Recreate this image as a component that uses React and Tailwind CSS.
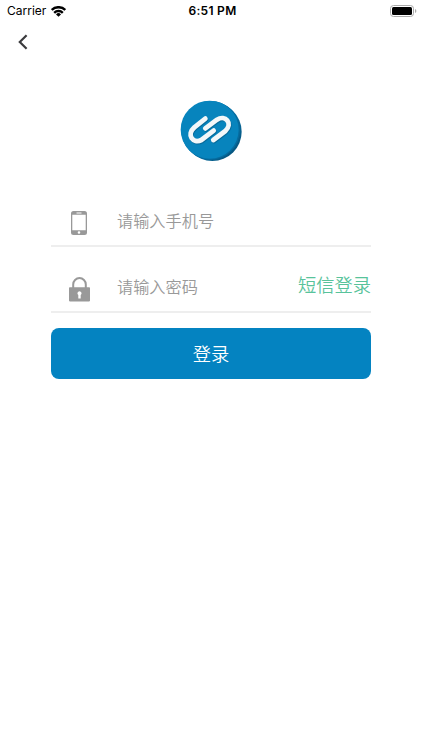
const cjk = "font-['Noto_Sans_CJK_SC',sans-serif] font-[350]";

function Logo() {
  return (
    <svg width="74" height="74" viewBox="0 0 222 222" fill="none">
      <defs>
        <linearGradient id="edge" x1="0" y1="0" x2="1" y2="1">
          <stop offset="0.5" stopColor="#0874aa" />
          <stop offset="1" stopColor="#064b70" />
        </linearGradient>
      </defs>
      <circle cx="115" cy="113" r="88" fill="url(#edge)" />
      <circle cx="110" cy="109" r="88" fill="#066b9e" />
      <circle cx="107" cy="107" r="87" fill="#0784bd" />
      <g strokeWidth="14.5" strokeLinecap="round" strokeLinejoin="round">
        <g stroke="#076a9a" transform="translate(2 3)">
          <path d="M94 74 L61 100 C36 122 57 151 82 138 L119 110" />
          <path d="M94 103 L129 77 C154 61 178 88 154 111 L118 138" />
        </g>
        <g stroke="#f3f7f9">
          <path d="M94 74 L61 100 C36 122 57 151 82 138 L119 110" />
          <path d="M94 103 L129 77 C154 61 178 88 154 111 L118 138" />
        </g>
      </g>
    </svg>
  );
}

function Phone() {
  return (
    <svg width="16" height="24" viewBox="0 0 16 24">
      <path fillRule="evenodd" fill="#999" d="M2.5 0h11A2.5 2.5 0 0 1 16 2.5v19a2.5 2.5 0 0 1-2.5 2.5h-11A2.5 2.5 0 0 1 0 21.5v-19A2.5 2.5 0 0 1 2.5 0ZM1.3 3.7v15.6h13.4V3.7ZM5.5 1.4v1h5v-1ZM8 20.2a1.3 1.3 0 1 0 0 2.6 1.3 1.3 0 0 0 0-2.6Z" />
    </svg>
  );
}

function Lock() {
  return (
    <svg width="21" height="25" viewBox="0 0 21 25">
      <path d="M4.2 11V7.4a6.3 6.3 0 0 1 12.6 0V11" fill="none" stroke="#999" strokeWidth="2" />
      <path fillRule="evenodd" fill="#999" d="M.8 10.2h19.4q.8 0 .8.8v12.6q0 .8-.8.8H.8q-.8 0-.8-.8V11q0-.8.8-.8ZM10.5 14.2a2.1 2.1 0 0 0-1.2 3.8v3.4h2.4v-3.4a2.1 2.1 0 0 0-1.2-3.8Z" />
    </svg>
  );
}

export default function App() {
  return (
    <div className="flex h-[750px] w-[422px] flex-col overflow-hidden bg-white font-['Inter',sans-serif]">
      <header className="grid h-[22px] grid-cols-3 items-center pl-[7px] pr-[5px] text-black">
        <div className="flex items-center gap-[5px] text-[12px] leading-none">
          <span>Carrier</span>
          <svg width="15" height="11" viewBox="0 0 15 11" fill="none" stroke="#000" strokeWidth="2.4">
            <path d="M.7 4a9.6 9.6 0 0 1 13.6 0M3.2 6.8a6.1 6.1 0 0 1 8.6 0" />
            <path d="M7.5 10.8 5 8.4a3.5 3.5 0 0 1 5 0Z" fill="#000" stroke="none" />
          </svg>
        </div>
        <div className="whitespace-nowrap pl-px text-center text-[12px] font-semibold leading-none tracking-[0.3px]">6:51 PM</div>
        <svg className="justify-self-end" width="27" height="12" viewBox="0 0 27 12">
          <rect x=".5" y=".5" width="23" height="11" rx="3" fill="none" stroke="#aaa" />
          <rect x="2" y="2" width="20" height="8" rx="1.5" />
          <path d="M25 4v4q1.4-.6 1.4-2T25 4Z" fill="#aaa" />
        </svg>
      </header>
      <nav className="flex h-10 items-center pl-[18px]">
        <button aria-label="返回">
          <svg width="10" height="16" viewBox="0 0 10 16" fill="none" stroke="#3b3b3d" strokeWidth="2.2">
            <path d="M8.6 1.2 1.8 8l6.8 6.8" />
          </svg>
        </button>
      </nav>
      <main className="flex flex-col px-[51px] pt-8">
        <div className="flex justify-center"><Logo /></div>
        <div className="mt-[31px] flex h-12 items-center border-b-2 border-[#eee]">
          <div className="ml-[17px] flex w-[22px] justify-center pt-px"><Phone /></div>
          <span className={`${cjk} ml-[27px] pb-[5px] text-[16.2px] leading-6 text-[#999]`}>请输入手机号</span>
        </div>
        <div className="flex h-[66px] items-end border-b-2 border-[#eee] pb-[9px]">
          <div className="ml-[17px] flex w-[22px] justify-center"><Lock /></div>
          <span className={`${cjk} ml-[27px] pb-[2px] text-[16.2px] leading-7 text-[#999]`}>请输入密码</span>
          <a className={`${cjk} ml-auto pb-[4px] text-[18.3px] leading-7 text-[#58c39b]`}>短信登录</a>
        </div>
        <button className={`${cjk} mt-[15px] h-[51px] rounded-[8px] bg-[#0483c1] text-[18.3px] leading-none text-white`}>登录</button>
      </main>
    </div>
  );
}
